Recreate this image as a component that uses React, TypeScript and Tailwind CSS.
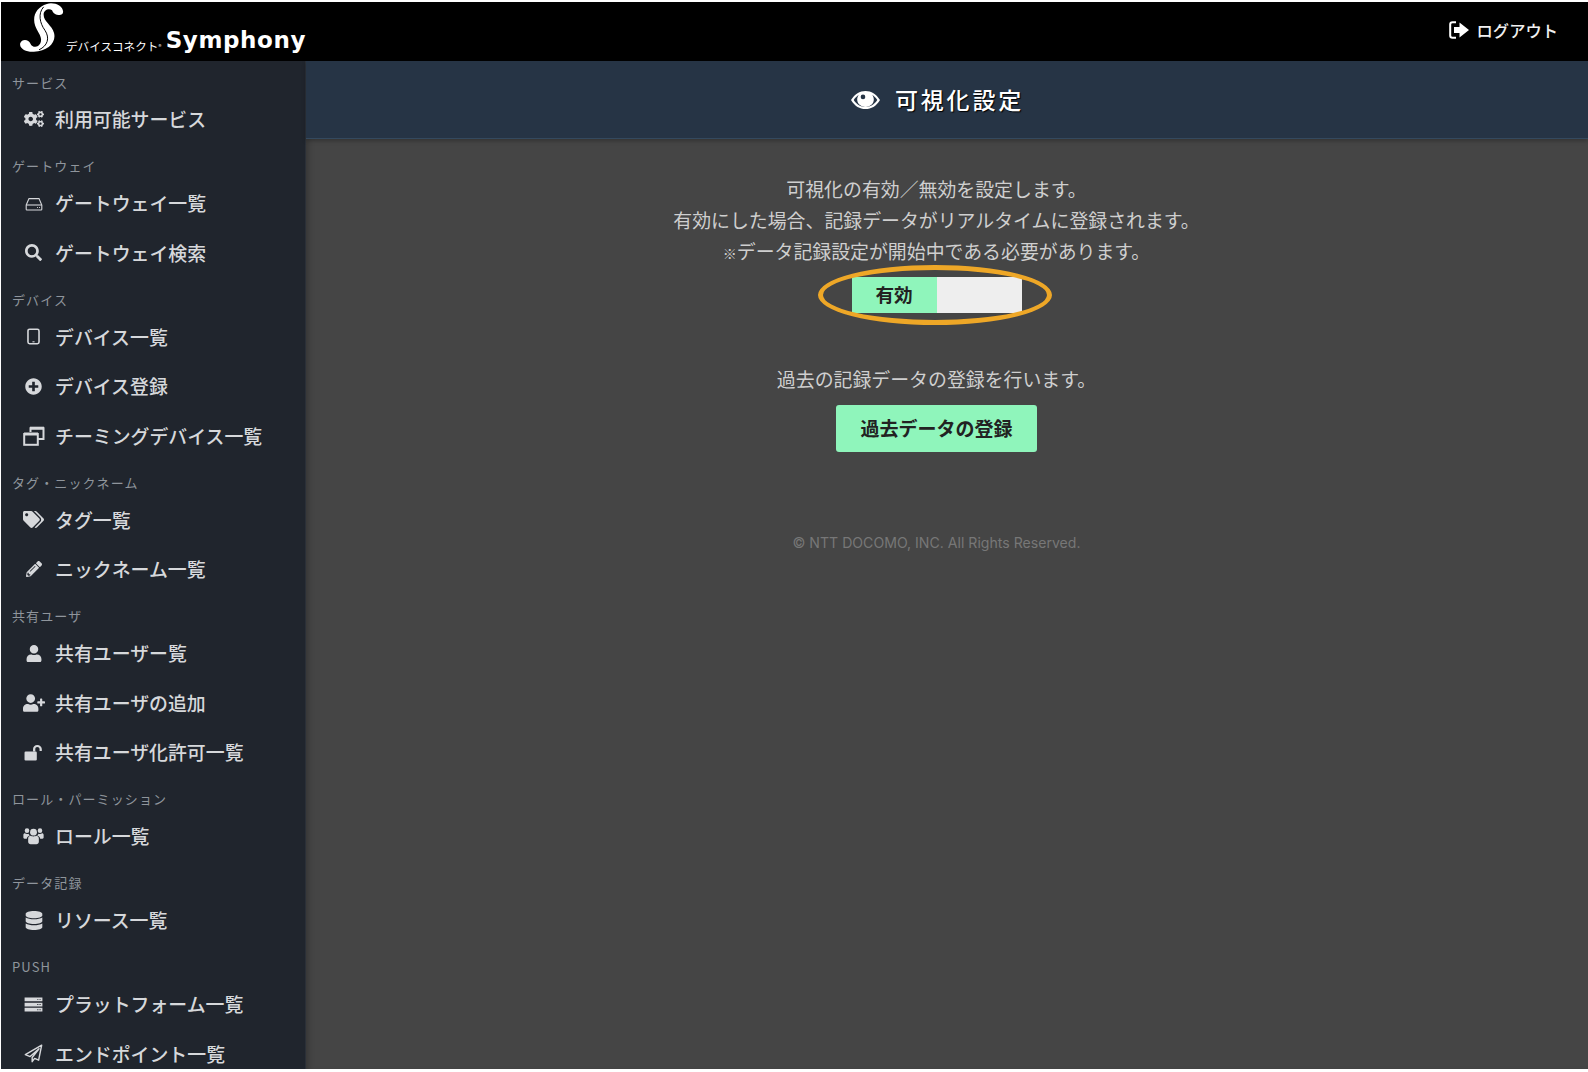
import type { IconType } from "react-icons";
import { FaCogs, FaSearch, FaPlusCircle, FaTags, FaPencilAlt, FaUser, FaUserPlus, FaDatabase } from "react-icons/fa";

const TabletIcon: IconType = (props) => (
  <svg viewBox="0 0 16 16" fill="none" stroke="currentColor" strokeWidth="1.5" {...props}>
    <rect x="2.8" y="1.2" width="10.4" height="13.6" rx="1.6" />
    <path d="M7 13h2" strokeWidth="1" />
  </svg>
);

const HddIcon: IconType = (props) => (
  <svg viewBox="0 0 18 16" fill="none" stroke="currentColor" strokeWidth="1.1" {...props}>
    <path d="M1.2 9L4 2.6H14L16.8 9V13.2Q16.8 14 16 14H2Q1.2 14 1.2 13.2Z" />
    <path d="M1.2 9H16.8" />
    <path d="M12 11.5h.9M14 11.5h.9" strokeWidth="1.2" />
  </svg>
);

const RestoreIcon: IconType = (props) => (
  <svg viewBox="0 0 22 20" fill="none" stroke="currentColor" {...props}>
    <path d="M7.5 6V2.2H20.5V13H15" strokeWidth="2" />
    <path d="M7 2.2H21" strokeWidth="3" />
    <rect x="1.2" y="8" width="13.6" height="10.8" strokeWidth="2" />
    <path d="M1 8H15" strokeWidth="3" />
  </svg>
);

const UnlockIcon: IconType = (props) => (
  <svg viewBox="0 0 20 18" fill="currentColor" {...props}>
    <rect x="0.5" y="8" width="13" height="9.5" rx="1.2" />
    <path d="M9.5 8V5.4C9.5 2.8 11.4 1 14 1S18.8 2.8 18.8 5.4V7.4H16.4V5.4C16.4 4.2 15.3 3.3 14 3.3S11.9 4.2 11.9 5.4V8Z" />
  </svg>
);

const UsersIcon: IconType = (props) => (
  <svg viewBox="0 0 22 18" fill="currentColor" {...props}>
    <circle cx="11" cy="5" r="3.6" />
    <circle cx="4.2" cy="3.4" r="2.4" />
    <circle cx="17.8" cy="3.4" r="2.4" />
    <path d="M5.4 11.6C5.4 9.8 6.8 8.8 8 8.8C9 9.6 13 9.6 14 8.8C15.2 8.8 16.6 9.8 16.6 11.6V15C16.6 16.6 15.4 17.6 14 17.6H8C6.6 17.6 5.4 16.6 5.4 15Z" />
    <path d="M0.4 7.8C0.4 6.8 1.2 6.2 2 6.2C3 7 5 7 5.8 6.6C6 7.4 6.6 8 7.2 8.4C5.4 9 4.2 10 4 11.8H1.6C0.8 11.8 0.4 11.2 0.4 10.6Z" />
    <path d="M21.6 7.8C21.6 6.8 20.8 6.2 20 6.2C19 7 17 7 16.2 6.6C16 7.4 15.4 8 14.8 8.4C16.6 9 17.8 10 18 11.8H20.4C21.2 11.8 21.6 11.2 21.6 10.6Z" />
  </svg>
);

const ServerIcon: IconType = (props) => (
  <svg viewBox="0 0 20 16" fill="currentColor" {...props}>
    <path fillRule="evenodd" d="M.5.5h19v4H.5zM14 2h1.2v1H14zM16.4 2h1.2v1h-1.2z" />
    <path fillRule="evenodd" d="M.5 6h19v4H.5zM14 7.5h1.2v1H14zM16.4 7.5h1.2v1h-1.2z" />
    <path fillRule="evenodd" d="M.5 11.5h19v4H.5zM14 13h1.2v1H14zM16.4 13h1.2v1h-1.2z" />
  </svg>
);

const PlaneIcon: IconType = (props) => (
  <svg viewBox="0 0 20 20" fill="none" stroke="currentColor" strokeWidth="1.5" strokeLinejoin="round" {...props}>
    <path d="M18.6 1.2L1.4 11.2L6.4 13.2L15.8 5L8.6 14.2V18.6L11.2 15.2L15.4 17Z" />
  </svg>
);

const EyeIcon = () => (
  <svg viewBox="0 0 30 20" className="h-[20px] w-[29px]">
    <path
      fill="#fff"
      fillRule="evenodd"
      d="M0 10C4 3.5 9 .6 15 .6S26 3.5 30 10C26 16.5 21 19.4 15 19.4S4 16.5 0 10ZM2.8 10C6 14.8 10 17.3 15 17.3S24 14.8 27.2 10C25.6 7.6 23.8 5.8 21.8 4.6C23 6 23.6 7.8 23.6 9.6C23.6 14.2 19.8 17 15 17S6.4 14.2 6.4 9.6C6.4 7.8 7 6 8.2 4.6C6.2 5.8 4.4 7.6 2.8 10Z"
    />
    <circle cx="15" cy="9.6" r="7.6" fill="#fff" />
    <circle cx="12.4" cy="6.8" r="2.4" fill="#263445" />
  </svg>
);

const sections: { label: string; items: { icon: IconType; text: string; w: number; h: number }[] }[] = [
  { label: "サービス", items: [{ icon: FaCogs, text: "利用可能サービス", w: 20, h: 20 }] },
  {
    label: "ゲートウェイ",
    items: [
      { icon: HddIcon, text: "ゲートウェイ一覧", w: 18, h: 16 },
      { icon: FaSearch, text: "ゲートウェイ検索", w: 17, h: 17 },
    ],
  },
  {
    label: "デバイス",
    items: [
      { icon: TabletIcon, text: "デバイス一覧", w: 17, h: 17 },
      { icon: FaPlusCircle, text: "デバイス登録", w: 17, h: 17 },
      { icon: RestoreIcon, text: "チーミングデバイス一覧", w: 22, h: 20 },
    ],
  },
  {
    label: "タグ・ニックネーム",
    items: [
      { icon: FaTags, text: "タグ一覧", w: 21, h: 21 },
      { icon: FaPencilAlt, text: "ニックネーム一覧", w: 16, h: 16 },
    ],
  },
  {
    label: "共有ユーザ",
    items: [
      { icon: FaUser, text: "共有ユーザー覧", w: 16, h: 17 },
      { icon: FaUserPlus, text: "共有ユーザの追加", w: 22, h: 18 },
      { icon: UnlockIcon, text: "共有ユーザ化許可一覧", w: 19, h: 17 },
    ],
  },
  { label: "ロール・パーミッション", items: [{ icon: UsersIcon, text: "ロール一覧", w: 21, h: 18 }] },
  { label: "データ記録", items: [{ icon: FaDatabase, text: "リソース一覧", w: 18, h: 19 }] },
  {
    label: "PUSH",
    items: [
      { icon: ServerIcon, text: "プラットフォーム一覧", w: 19, h: 15 },
      { icon: PlaneIcon, text: "エンドポイント一覧", w: 19, h: 19 },
    ],
  },
];

const Logo = () => (
  <div className="flex h-full w-[305px] shrink-0 items-start">
    <svg viewBox="55 5 140 160" className="ml-[18px] mt-[0px] h-[52px] w-[46px] shrink-0">
      <path
        fill="#fff"
        d="M190 35C190 16 160 4 140 11C108 21 94 48 104 78C112 100 128 112 120 132C112 148 94 144 90 134C84 118 62 118 58 132C54 150 80 160 100 158C142 156 170 130 162 100C156 76 130 66 130 44C130 30 145 24 156 30C160 46 190 52 190 35Z"
      />
      <path fill="none" stroke="#000" strokeWidth="3" d="M130 20C112 40 118 70 134 92C150 116 142 140 116 152" />
    </svg>
    <span className="ml-[1px] mt-[35px] text-[11.6px] leading-[18px] whitespace-nowrap text-white">
      デバイスコネクト
    </span>
    <span className="mt-[40px] w-[10px] text-[6px] leading-[10px] text-white">®</span>
    <span className="mt-[22px] font-['DejaVu_Sans'] text-[23px] leading-[32px] font-bold tracking-[0.6px] text-white">
      Symphony
    </span>
  </div>
);

const LogoutIcon = () => (
  <svg viewBox="0 0 20 20" className="h-[20px] w-[20px]" fill="none">
    <path d="M7 2.2H3.5Q1.2 2.2 1.2 4.5V15.5Q1.2 17.8 3.5 17.8H7" stroke="#fff" strokeWidth="2" />
    <path d="M5 7H10.5V2.6L20 10L10.5 17.4V13H5Z" fill="#fff" />
  </svg>
);

const Sidebar = () => (
  <aside className="h-full w-[305px] shrink-0 overflow-hidden border-r border-[#2b3038] bg-[#20252d]">
    {sections.map((s, i) => (
      <div key={s.label}>
        <div
          className={
            i === 0
              ? "h-[34px] pt-[13px] pl-[11px] text-[13px] leading-[18px] tracking-[1.1px] text-[#8f959c]"
              : "h-[34.7px] pt-[13px] pl-[11px] text-[13px] leading-[18px] tracking-[1.1px] text-[#8f959c]"
          }
        >
          {s.label}
        </div>
        {s.items.map((item) => (
          <div key={item.text} className="flex h-[49.4px] items-center pb-[0.5px] text-[#d6d8db]">
            <div className="flex w-[54px] shrink-0 justify-center pl-[11px]">
              <item.icon style={{ width: item.w, height: item.h }} />
            </div>
            <span className="text-[18.9px] font-medium whitespace-nowrap">{item.text}</span>
          </div>
        ))}
      </div>
    ))}
  </aside>
);

export default function App() {
  return (
    <div className="flex h-screen flex-col overflow-hidden bg-white pt-[2px] pb-[3px] pl-[1px] font-['Noto_Sans_CJK_JP',sans-serif]">
      <header className="flex h-[59px] shrink-0 items-start justify-between bg-black">
        <Logo />
        <div className="mt-[18px] mr-[30px] flex items-center gap-[8px] text-[16.3px] leading-[20px] font-medium text-[#f0f0f0]">
          <LogoutIcon />
          <span>ログアウト</span>
        </div>
      </header>
      <div className="flex min-h-0 flex-1">
        <Sidebar />
        <main className="min-w-0 flex-1 bg-[#454545] shadow-[inset_6px_0_6px_-4px_rgba(0,0,0,0.25)]">
          <div className="flex h-[78px] items-center justify-center gap-[15px] border-b border-[#34495e] bg-[#263445] pr-[19px] text-white shadow-[0_2px_4px_rgba(0,0,0,0.25)]">
            <EyeIcon />
            <h1 className="text-[23px] leading-none font-medium tracking-[2.8px] [text-shadow:1px_1px_1px_#000]">
              可視化設定
            </h1>
          </div>
          <div className="flex flex-col items-center pt-[34px] pr-[21px] text-[18.9px] leading-[31px] text-[#cfcfcf]">
            <p>可視化の有効／無効を設定します。</p>
            <p>有効にした場合、記録データがリアルタイムに登録されます。</p>
            <p className="h-[31px]">
              <span className="text-[14px] leading-none font-bold">※</span>データ記録設定が開始中である必要があります。
            </p>
            <div className="relative mt-[11px] flex h-[36px] w-[170px] rounded-[2px] bg-[#eeeeee]">
              <div className="flex w-[85px] items-center justify-center bg-[#8ff5bb] pb-[3px] text-[18.6px] font-bold text-[#222]">
                有効
              </div>
              <div className="absolute top-[-12px] left-[-34px] h-[60px] w-[234px] rounded-[50%] border-[5px] border-[#eea727]" />
            </div>
            <p className="mt-[50px]">過去の記録データの登録を行います。</p>
            <button className="mt-[11px] h-[47px] w-[201px] rounded-[3px] bg-[#8ff5bb] pb-[2px] text-[19px] font-bold text-[#222]">
              過去データの登録
            </button>
            <p className="mt-[80px] font-['Inter'] text-[14.1px] leading-[22px] text-[#777777]">
              © NTT DOCOMO, INC. All Rights Reserved.
            </p>
          </div>
        </main>
      </div>
    </div>
  );
}
